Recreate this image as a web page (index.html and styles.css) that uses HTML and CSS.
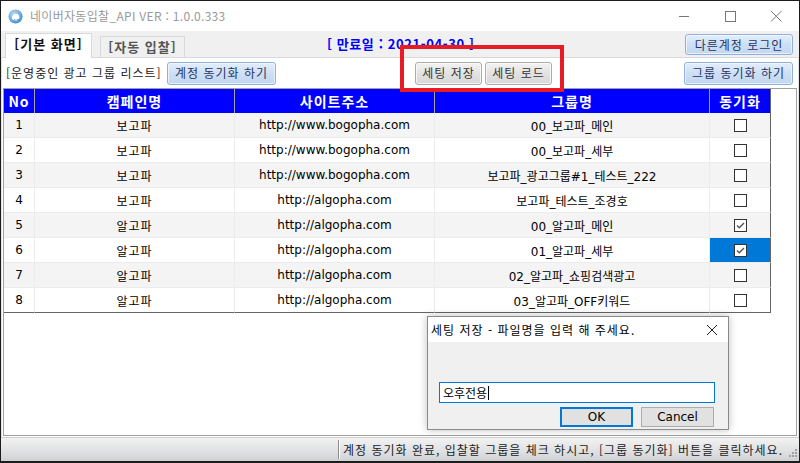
FILE: index.html
```html
<!DOCTYPE html>
<html lang="ko">
<head>
  <meta charset="UTF-8">
  <title>네이버자동입찰_API VER : 1.0.0.333</title>
  <link rel="stylesheet" href="styles.css">
</head>
<body>

<div class="window">
  <div class="titlebar">
    <svg class="app-icon" viewBox="0 0 16 16">
      <defs>
        <radialGradient id="ig" cx="0.4" cy="0.35" r="0.7">
          <stop offset="0" stop-color="#bfe0f7"/>
          <stop offset="1" stop-color="#3d8ad0"/>
        </radialGradient>
      </defs>
      <circle cx="8" cy="8" r="7.5" fill="url(#ig)"/>
      <path d="M4 10.2c0-3 1.8-5.2 4.4-5.2 2.3 0 3.8 1.8 3.8 4 0 1-.5 1.6-1.2 1.6H9.4v1.6H7.8v-1.6H6.3v1.2H4.9v-1.2c-.5 0-.9-.1-.9-.4z" fill="#fff"/>
    </svg>
    <span class="title">네이버자동입찰_API VER : 1.0.0.333</span>
    <div class="controls">
      <svg viewBox="0 0 46 30"><path d="M18 15.5h10" stroke="#777" stroke-width="1"/></svg>
      <svg viewBox="0 0 46 30"><rect x="18.5" y="10.5" width="10" height="10" fill="none" stroke="#777" stroke-width="1"/></svg>
      <svg viewBox="0 0 46 30"><path d="M18 10l10.5 10.5M28.5 10L18 20.5" stroke="#777" stroke-width="1"/></svg>
    </div>
  </div>

  <div class="client">
    <div class="tabstrip">
      <div class="tab active">[기본 화면]</div>
      <div class="tab">[자동 입찰]</div>
      <div class="expire">[ 만료일 : 2021-04-30 ]</div>
      <button class="btn blue login">다른계정 로그인</button>
    </div>

    <div class="page">
      <div class="toolbar">
        <span class="caption">[운영중인 광고 그룹 리스트]</span>
        <button class="btn blue wide">계정 동기화 하기</button>
        <div class="settings">
          <button class="btn gray">세팅 저장</button>
          <button class="btn gray">세팅 로드</button>
        </div>
        <button class="btn blue wide group-sync">그룹 동기화 하기</button>
      </div>

      <div class="listbox">
        <table class="grid">
          <thead>
            <tr>
              <th class="c-no">No</th>
              <th class="c-camp">캠페인명</th>
              <th class="c-site">사이트주소</th>
              <th class="c-group">그룹명</th>
              <th class="c-sync">동기화</th>
            </tr>
          </thead>
          <tbody>
            <tr><td>1</td><td>보고파</td><td>http://www.bogopha.com</td><td>00_보고파_메인</td><td><span class="check"></span></td></tr>
            <tr><td>2</td><td>보고파</td><td>http://www.bogopha.com</td><td>00_보고파_세부</td><td><span class="check"></span></td></tr>
            <tr><td>3</td><td>보고파</td><td>http://www.bogopha.com</td><td>보고파_광고그룹#1_테스트_222</td><td><span class="check"></span></td></tr>
            <tr><td>4</td><td>보고파</td><td>http://algopha.com</td><td>보고파_테스트_조경호</td><td><span class="check"></span></td></tr>
            <tr><td>5</td><td>알고파</td><td>http://algopha.com</td><td>00_알고파_메인</td><td><span class="check on"><svg viewBox="0 0 11 11"><path d="M2 5.5l2.3 2.3L9 3" fill="none" stroke="#555" stroke-width="1.4"/></svg></span></td></tr>
            <tr><td>6</td><td>알고파</td><td>http://algopha.com</td><td>01_알고파_세부</td><td class="selected"><span class="check on"><svg viewBox="0 0 11 11"><path d="M2 5.5l2.3 2.3L9 3" fill="none" stroke="#555" stroke-width="1.4"/></svg></span></td></tr>
            <tr><td>7</td><td>알고파</td><td>http://algopha.com</td><td>02_알고파_쇼핑검색광고</td><td><span class="check"></span></td></tr>
            <tr><td>8</td><td>알고파</td><td>http://algopha.com</td><td>03_알고파_OFF키워드</td><td><span class="check"></span></td></tr>
          </tbody>
        </table>
      </div>
    </div>

    <div class="statusbar">
      <div class="status-left"></div>
      <div class="status-text">계정 동기화 완료, 입찰할 그룹을 체크 하시고, [그룹 동기화] 버튼을 클릭하세요.</div>
      <svg class="grip" viewBox="0 0 12 12">
        <g fill="#a0a0a0">
          <rect x="9" y="1" width="2" height="2"/>
          <rect x="6" y="4" width="2" height="2"/><rect x="9" y="4" width="2" height="2"/>
          <rect x="3" y="7" width="2" height="2"/><rect x="6" y="7" width="2" height="2"/><rect x="9" y="7" width="2" height="2"/>
        </g>
      </svg>
    </div>
  </div>

  <div class="highlight"></div>

  <div class="dialog">
    <div class="dlg-title">
      <span>세팅 저장 - 파일명을 입력 해 주세요.</span>
      <svg class="dlg-close" viewBox="0 0 10 10"><path d="M0 0l10 10M10 0L0 10" stroke="#222" stroke-width="1"/></svg>
    </div>
    <div class="dlg-body">
      <div class="dlg-input">오후전용<span class="caret"></span></div>
      <div class="dlg-buttons">
        <button class="dlg-btn default">OK</button>
        <button class="dlg-btn">Cancel</button>
      </div>
    </div>
  </div>
</div>

</body>
</html>
```

FILE: styles.css
```css
* { box-sizing: border-box; }
body {
  margin: 0;
  background: #fff;
  font-family: "DejaVu Sans", "Noto Sans CJK KR", sans-serif;
  font-size: 12px;
  color: #000;
}

.window {
  position: relative;
  width: 800px;
  height: 463px;
  border: 1px solid #1c1c1c;
  border-bottom-width: 2px;
  background: #f0f0f0;
  display: flex;
  flex-direction: column;
  overflow: hidden;
}

/* title bar */
.titlebar {
  height: 30px;
  flex: none;
  background: #fff;
  display: flex;
  align-items: center;
}
.app-icon { width: 15px; height: 15px; margin-left: 7px; }
.title {
  margin-left: 7px;
  font-family: "Noto Sans CJK KR", sans-serif;
  font-size: 12px;
  color: #999;
  line-height: 16px;
  letter-spacing: 0.3px;
}
.controls { margin-left: auto; display: flex; align-self: stretch; }
.controls svg { width: 46px; height: 30px; display: block; }

.client { flex: 1; display: flex; flex-direction: column; }

/* tabs */
.tabstrip {
  height: 26px;
  flex: none;
  display: flex;
  align-items: flex-end;
  padding-left: 4px;
}
.tab {
  width: 85px;
  height: 21px;
  margin-left: 8px;
  border: 1px solid #d9d9d9;
  border-bottom: none;
  background: #f0f0f0;
  color: #555;
  font-family: "Noto Sans CJK KR", sans-serif;
  font-weight: bold;
  font-size: 13px;
  line-height: 16px;
  letter-spacing: 1px;
  text-align: center;
  padding-top: 2px;
}
.tab.active {
  width: 87px;
  height: 25px;
  margin-left: 0;
  margin-bottom: -1px;
  background: #fff;
  color: #111;
  position: relative;
  z-index: 1;
  padding-top: 2px;
}
.expire {
  margin-left: 142px;
  align-self: center;
  color: #0000ff;
  font-family: "Noto Sans CJK KR", sans-serif;
  font-weight: bold;
  font-size: 13px;
  line-height: 16px;
  letter-spacing: 0.6px;
}

/* buttons */
.btn {
  font-family: "Noto Sans CJK KR", sans-serif;
  font-size: 12px;
  line-height: 14px;
  letter-spacing: 1px;
  height: 23px;
  padding: 0;
  border-radius: 3px;
  cursor: pointer;
}
.btn.blue {
  background: linear-gradient(#e4eefa, #cddff5 50%, #c3d7f1);
  border: 1px solid #8fb0dc;
  box-shadow: inset 0 0 0 1px rgba(255,255,255,0.6);
  color: #1f3462;
}
.btn.gray {
  width: 67px;
  background: linear-gradient(#f3f3f3, #e2e2e2 50%, #d8d8d8);
  border: 1px solid #acacac;
  box-shadow: inset 0 0 0 1px rgba(255,255,255,0.7);
  color: #333;
}
.btn.wide { width: 109px; }
.btn.login {
  width: 108px;
  height: 21px;
  margin-left: auto;
  margin-right: 6px;
  align-self: flex-start;
  margin-top: 3px;
}

/* tab page */
.page {
  flex: 1;
  background: #fff;
  border-top: 1px solid #d9d9d9;
  border-left: 1px solid #e3e3e3;
  border-right: 1px solid #e3e3e3;
  padding: 0 1px 1px;
  display: flex;
  flex-direction: column;
}
.toolbar {
  height: 30px;
  flex: none;
  display: flex;
  align-items: center;
  padding-left: 3px;
}
.caption {
  width: 161px;
  font-family: "Noto Sans CJK KR", sans-serif;
  font-size: 12px;
  line-height: 16px;
  letter-spacing: 1px;
  color: #222;
  white-space: nowrap;
}
.settings { display: flex; gap: 3px; margin-left: 139px; }
.group-sync { margin-left: auto; margin-right: 4px; }

/* grid */
.listbox {
  flex: 1;
  border: 1px solid #a0a0a0;
  background: #fff;
}
.grid {
  table-layout: fixed;
  border-collapse: separate;
  border-spacing: 0;
  width: 767px;
}
.grid th, .grid td {
  text-align: center;
  padding: 0;
  white-space: nowrap;
  overflow: hidden;
}
.grid th {
  height: 24px;
  background: #0000ff;
  color: #fff;
  font-family: "Noto Sans CJK KR", sans-serif;
  font-weight: bold;
  font-size: 14px;
  letter-spacing: 1px;
  border-right: 1px solid #a0a0a0;
}
.grid th.c-sync { border-right: 1px solid #646464; }
.c-no { width: 31px; }
.c-camp { width: 200px; }
.c-site { width: 200px; }
.c-group { width: 275px; }
.c-sync { width: 61px; }

.grid td {
  height: 25px;
  font-size: 12px;
  border-right: 1px solid #ececec;
  border-bottom: 1px solid #ececec;
}
.grid td:nth-child(2) { letter-spacing: 1px; }
.grid td:last-child { border-right: 1px solid #646464; }
.grid tr:last-child td { border-bottom: 1px solid #646464; }
.grid tbody tr:nth-child(odd) td { background: #f4f4f4; }
.grid tbody tr td.selected { background: #0078d7; }

.check {
  display: inline-block;
  width: 13px;
  height: 13px;
  border: 1px solid #333;
  background: #fff;
  vertical-align: middle;
  margin-left: 1px;
}
.check svg { display: block; width: 11px; height: 11px; }

/* status bar */
.statusbar {
  height: 24px;
  flex: none;
  display: flex;
  align-items: center;
  background: linear-gradient(#f2f2f2, #dfe0e2 60%, #cfd1d5);
  border-top: 1px solid #d0d0d0;
}
.status-left {
  width: 338px;
  align-self: stretch;
  border-right: 1px solid #8c8c8c;
  box-shadow: 1px 0 0 #fff;
  margin: 2px 0;
}
.status-text {
  padding-left: 4px;
  font-family: "Noto Sans CJK KR", sans-serif;
  font-size: 12px;
  line-height: 16px;
  color: #222;
  letter-spacing: 1px;
  white-space: nowrap;
}
.grip { width: 12px; height: 12px; margin-left: auto; align-self: flex-end; margin-right: 1px; margin-bottom: 1px; flex: none; }

/* red annotation box */
.highlight {
  position: absolute;
  left: 399px;
  top: 44px;
  width: 164px;
  height: 47px;
  border: 4px solid #e81c24;
}

/* input dialog */
.dialog {
  position: absolute;
  left: 426px;
  top: 315px;
  width: 302px;
  height: 114px;
  border: 1px solid #8a8a8a;
  background: #f0f0f0;
  box-shadow: 0 0 8px rgba(0,0,0,0.25);
}
.dlg-title {
  height: 25px;
  background: #fff;
  display: flex;
  align-items: center;
  padding: 0 11px 0 3px;
  font-family: "Noto Sans CJK KR", sans-serif;
  font-size: 12px;
  line-height: 16px;
  letter-spacing: 1px;
}
.dlg-close { width: 10px; height: 10px; margin-left: auto; }
.dlg-body { padding: 40px 13px 0 11px; }
.dlg-input {
  height: 21px;
  border: 1px solid #0078d7;
  background: #fff;
  padding-left: 3px;
  font-family: "Noto Sans CJK KR", sans-serif;
  font-size: 12px;
  line-height: 19px;
  display: flex;
  align-items: center;
}
.caret { width: 1px; height: 14px; background: #000; margin-left: 1px; }
.dlg-buttons {
  display: flex;
  justify-content: flex-end;
  gap: 8px;
  margin-top: 4px;
  padding-right: 1px;
}
.dlg-btn {
  width: 73px;
  height: 20px;
  padding: 0;
  background: #e1e1e1;
  border: 1px solid #adadad;
  font-family: "DejaVu Sans", sans-serif;
  font-size: 12px;
  color: #000;
}
.dlg-btn.default { border: 2px solid #0078d7; }
```
